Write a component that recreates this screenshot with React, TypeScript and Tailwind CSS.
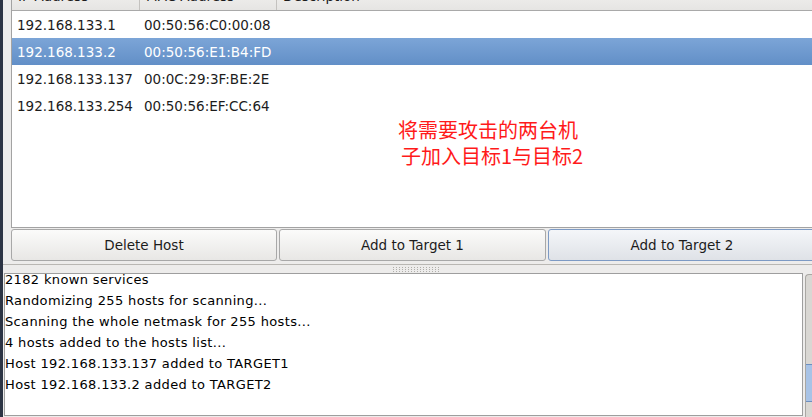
import React from "react";

const hosts = [
  { ip: "192.168.133.1", mac: "00:50:56:C0:00:08" },
  { ip: "192.168.133.2", mac: "00:50:56:E1:B4:FD", selected: true },
  { ip: "192.168.133.137", mac: "00:0C:29:3F:BE:2E" },
  { ip: "192.168.133.254", mac: "00:50:56:EF:CC:64" },
];

const logLines = [
  "2182 known services",
  "Randomizing 255 hosts for scanning...",
  "Scanning the whole netmask for 255 hosts...",
  "4 hosts added to the hosts list...",
  "Host 192.168.133.137 added to TARGET1",
  "Host 192.168.133.2 added to TARGET2",
];

function GripDots() {
  // little dotted handle of the paned separator
  return (
    <div className="grid grid-cols-[repeat(16,3px)] gap-y-[1px]">
      {Array.from({ length: 48 }).map((_, i) => (
        <span key={i} className="w-[1px] h-[1px] bg-[#b0aeaa]" />
      ))}
    </div>
  );
}

export default function App() {
  return (
    <div
      className="w-[812px] h-[417px] overflow-hidden bg-[#edeceb] flex text-[13.5px] text-[#1c1c1c]"
      style={{ fontFamily: '"DejaVu Sans", "Noto Sans CJK SC", sans-serif' }}
    >
      <div className="w-[3px] shrink-0 bg-[#2c3444]" />

      <div className="flex-1 flex flex-col min-w-0">
        {/* top pane: hosts list + buttons */}
        <div className="h-[265px] shrink-0 pl-[8px] flex flex-col border-b border-[#b9b7b3]">
          <div className="relative h-[228px] shrink-0 bg-white border-l border-b border-[#a3a3a3] overflow-hidden">
            <div className="flex h-[24px] mt-[-13px] bg-gradient-to-b from-[#f3f2f1] to-[#e6e5e3] border-b border-[#a9a9a9] text-[13.5px] leading-[19px]">
              <div className="w-[128px] pl-[6px] border-r border-[#c4c2bf]">IP Address</div>
              <div className="w-[137px] pl-[6px] border-r border-[#c4c2bf]">MAC Address</div>
              <div className="flex-1 pl-[6px]">Description</div>
            </div>
            {hosts.map((h) => (
              <div
                key={h.ip}
                className={
                  "flex h-[27px] items-center pt-[2px] " +
                  (h.selected
                    ? "bg-gradient-to-b from-[#7ca5d7] to-[#628fc7] text-white"
                    : "")
                }
              >
                <div className="w-[128px] pl-[5px]">{h.ip}</div>
                <div className="pl-[4px]">{h.mac}</div>
              </div>
            ))}
            <div
              className="absolute left-[386px] top-[117px] text-[20px] leading-[26px] text-[#ff1a1a]"
              style={{ fontFamily: '"Noto Sans CJK SC", sans-serif' }}
            >
              <div>将需要攻击的两台机</div>
              <div className="pl-[3px]">子加入目标1与目标2</div>
            </div>
          </div>

          <div className="flex gap-[2px] pt-[1px] h-[33px] overflow-hidden">
            <button className="w-[266px] shrink-0 h-[32px] rounded-[3px] border border-[#a8a8a8] bg-gradient-to-b from-[#fbfbfa] to-[#e8e7e5]">
              Delete Host
            </button>
            <button className="w-[267px] shrink-0 h-[32px] rounded-[3px] border border-[#a8a8a8] bg-gradient-to-b from-[#fbfbfa] to-[#e8e7e5]">
              Add to Target 1
            </button>
            <button className="w-[268px] shrink-0 h-[32px] rounded-[3px] border border-[#7d9ac4] bg-gradient-to-b from-[#f4f6f9] to-[#dfe2e7]">
              Add to Target 2
            </button>
          </div>
        </div>

        {/* paned separator */}
        <div className="h-[8px] shrink-0 flex items-center justify-center pl-[19px]">
          <GripDots />
        </div>

        {/* bottom pane: log */}
        <div className="flex flex-1 min-h-0 pl-[1px]">
          <div className="flex-1 bg-white border border-[#9e9e9e] overflow-hidden mb-[1px]">
            <div className="mt-[-5px] text-[13px] tracking-[0.35px] leading-[21px] text-black">
              {logLines.map((l) => (
                <div key={l} className="whitespace-nowrap">
                  {l}
                </div>
              ))}
            </div>
          </div>
          <div className="w-[7px] ml-[2px] mt-[1px] rounded-tl-[4px] border-l border-t border-[#a9a7a3] bg-[#d9d7d3] flex flex-col">
            <div className="h-[89px]" />
            <div className="h-[38px] bg-[#a8c3e6] border-t border-b border-[#6d8fc0]" />
          </div>
        </div>
      </div>
    </div>
  );
}
